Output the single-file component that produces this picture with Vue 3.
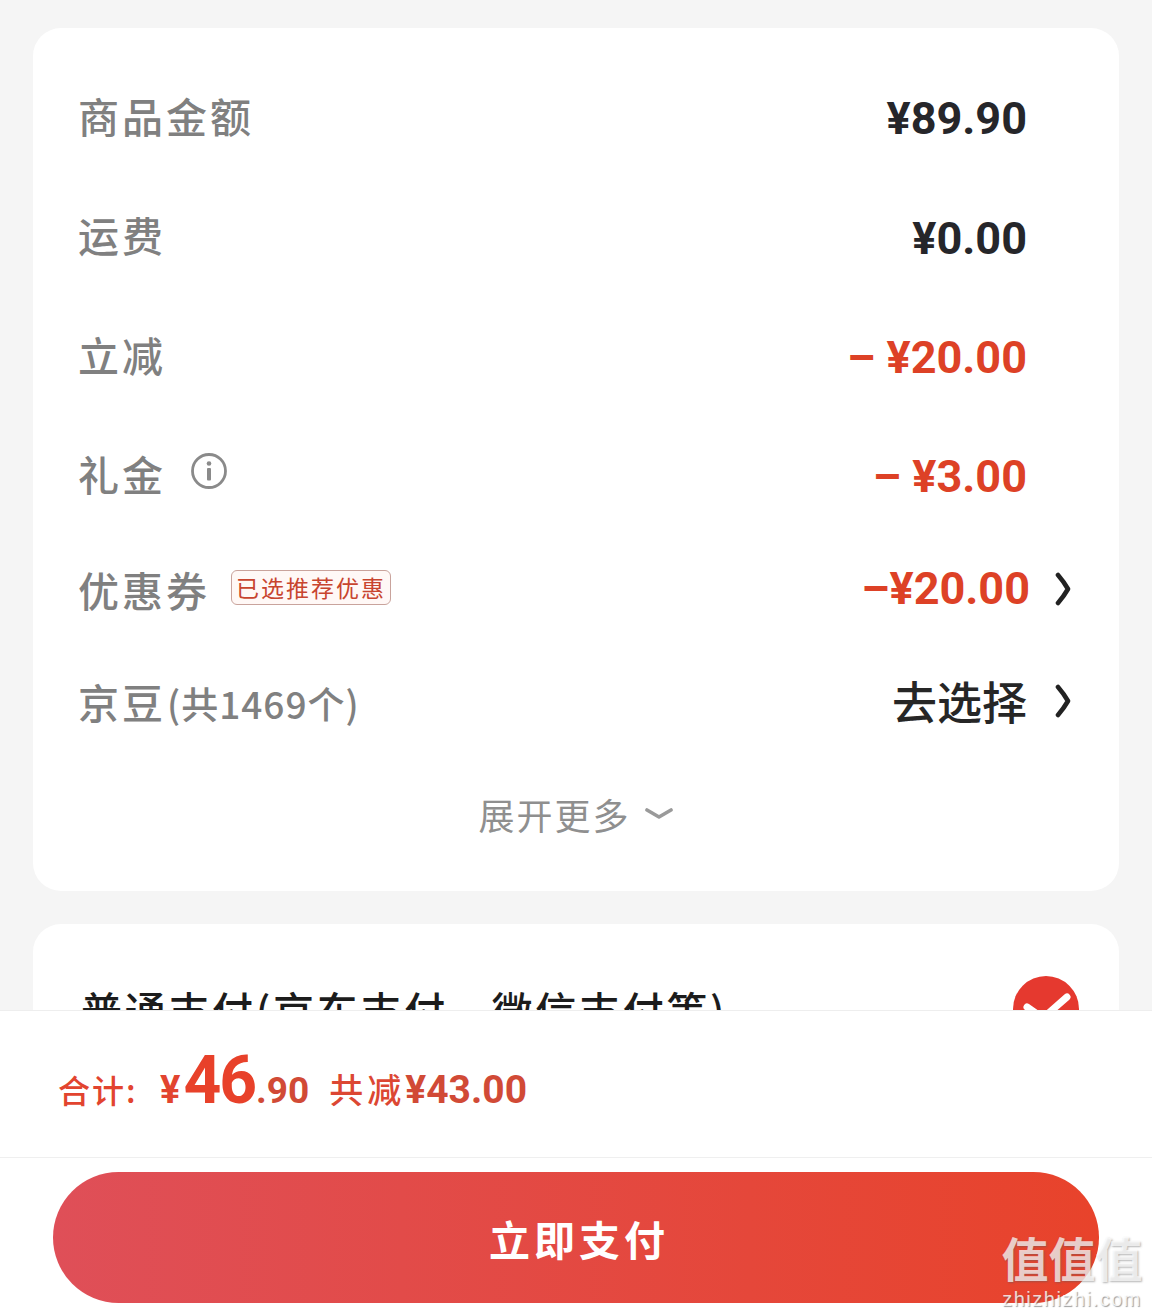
<script setup>
const rows = [
  { label: '商品金额', value: '¥89.90', tone: 'dark', h: 119 },
  { label: '运费', value: '¥0.00', tone: 'dark', h: 120 },
  { label: '立减', value: '– ¥20.00', tone: 'red', h: 119 },
  { label: '礼金', value: '– ¥3.00', tone: 'red', h: 119, info: true },
  { label: '优惠券', value: '–¥20.00', tone: 'red', h: 105, tag: '已选推荐优惠', arrow: true, tight: true },
  { label: '京豆', sub: '(共1469个)', value: '去选择', tone: 'plain', h: 119, arrow: true },
]
</script>

<template>
  <div class="page">
    <div class="scroll">
      <section class="card summary">
        <div
          v-for="row in rows"
          :key="row.label"
          class="row"
          :style="{ height: row.h + 'px' }"
        >
          <div class="left">
            <span class="label" :class="{ flat: row.sub || row.tag }">{{ row.label }}<span v-if="row.sub" class="sub">{{ row.sub }}</span></span>
            <svg v-if="row.info" class="info" viewBox="0 0 36 36" aria-hidden="true">
              <circle cx="18" cy="18" r="16.5" fill="none" stroke="#8a8a8a" stroke-width="2.8" />
              <circle cx="18" cy="10.5" r="2.3" fill="#8a8a8a" />
              <rect x="16" y="15" width="4" height="12.5" rx="1" fill="#8a8a8a" />
            </svg>
            <span v-if="row.tag" class="tag">{{ row.tag }}</span>
          </div>
          <div class="right">
            <span class="value" :class="[row.tone, { tight: row.tight }]">{{ row.value }}</span>
            <svg v-if="row.arrow" class="chevron" viewBox="0 0 16 34" aria-hidden="true">
              <path d="M3 3 Q9 10 13 17 Q9 24 3 31" fill="none" stroke="#222" stroke-width="4.6" stroke-linecap="round" stroke-linejoin="round" />
            </svg>
          </div>
        </div>
        <div class="more">
          <span>展开更多</span>
          <svg class="down" viewBox="0 0 28 14" aria-hidden="true">
            <path d="M2 3 L14 10 L26 3" fill="none" stroke="#9a9a9a" stroke-width="3.6" stroke-linecap="round" stroke-linejoin="round" />
          </svg>
        </div>
      </section>

      <section class="card pay">
        <span class="pay-label">普通支付(京东支付、微信支付等)</span>
        <svg class="check" viewBox="0 0 66 66" aria-hidden="true">
          <circle cx="33" cy="33" r="33" fill="#e5392f" />
          <path d="M14 31 L30 42 L54 21" fill="none" stroke="#fff" stroke-width="7" stroke-linecap="round" stroke-linejoin="round" />
        </svg>
      </section>
    </div>

    <footer class="footer">
      <div class="total">
        <span class="t-label">合计:</span>
        <span class="t-yen">¥</span><span class="t-big">46</span><span class="t-cents">.90</span>
        <span class="t-save">共减</span><span class="t-dec">¥43.00</span>
      </div>
      <div class="action">
        <button class="pay-btn" type="button">立即支付</button>
      </div>
      <div class="watermark" aria-hidden="true">
        <span class="wm-cn">值值值</span>
        <span class="wm-en">zhizhizhi.com</span>
      </div>
    </footer>
  </div>
</template>

<style>
html, body { margin: 0; background: #f5f5f5; }
</style>

<style scoped>
.page {
  position: relative;
  width: 1152px;
  height: 1316px;
  overflow: hidden;
  background: #f5f5f5;
  font-family: "Noto Sans CJK SC", "Noto Sans", sans-serif;
}
.scroll {
  height: 1010px;
  overflow: hidden;
  box-sizing: border-box;
  padding: 28px 33px 0;
  display: flex;
  flex-direction: column;
  gap: 33px;
}
.card {
  flex: none;
  background: #fff;
  border-radius: 28px;
}
.summary {
  height: 863px;
  box-sizing: border-box;
  padding: 31px 48px 0 46px;
}
.row {
  display: flex;
  align-items: center;
  justify-content: space-between;
}
.left { display: flex; align-items: center; }
.label {
  font-size: 41px;
  letter-spacing: 3px;
  color: #808080;
  font-weight: 500;
  margin: 0 0 8px -1px;
  white-space: nowrap;
}
.label.flat { margin-bottom: 0; }
.sub { font-size: 37px; letter-spacing: 1px; margin-left: 1px; }
.info { width: 36px; height: 36px; margin: -12px 0 0 25px; }
.tag {
  margin: -2px 0 0 21px;
  width: 160px;
  height: 35px;
  box-sizing: border-box;
  border: 1px solid #c9a39c;
  border-radius: 6px;
  background: #fff8f6;
  color: #c8452f;
  font-size: 23px;
  line-height: 33px;
  letter-spacing: 2px;
  text-align: center;
  white-space: nowrap;
  overflow: hidden;
}
.right { display: flex; align-items: center; padding-right: 44px; position: relative; }
.value {
  font-family: Roboto, "Noto Sans CJK SC", sans-serif;
  font-size: 45px;
  font-weight: 700;
  line-height: 1;
  white-space: pre;
}
.value.tight { margin-right: -3px; }
.dark { color: #26262a; }
.red { color: #dd4126; }
.plain {
  font-family: "Noto Sans CJK SC", sans-serif;
  color: #262626;
  font-weight: 500;
  font-size: 45px;
}
.chevron {
  position: absolute;
  right: 0;
  top: 50%;
  width: 16px;
  height: 34px;
  margin-top: -17px;
}
.more {
  height: 108px;
  margin-left: -2px;
  padding-left: 3px;
  display: flex;
  align-items: center;
  justify-content: center;
  gap: 14px;
  color: #8f8f8f;
  font-size: 36px;
  letter-spacing: 2px;
}
.down { width: 28px; height: 14px; }
.pay {
  position: relative;
  height: 200px;
  padding-left: 46px;
  padding-top: 55px;
  box-sizing: border-box;
}
.pay-label {
  display: block;
  font-size: 41px;
  letter-spacing: 2.7px;
  line-height: 60px;
  color: #1c1c1c;
  font-weight: 500;
  white-space: nowrap;
  margin-left: 2px;
}
.check {
  position: absolute;
  right: 40px;
  top: 52px;
  width: 66px;
  height: 66px;
}
.footer {
  height: 306px;
  box-sizing: border-box;
  background: #fff;
  border-top: 1px solid #eeeeee;
}
.total {
  height: 146px;
  box-sizing: border-box;
  padding: 22px 0 0 58px;
  display: flex;
  align-items: baseline;
  color: #e2442f;
  font-family: Roboto, "Noto Sans CJK SC", sans-serif;
  font-weight: 700;
}
.t-label {
  font-family: "Noto Sans CJK SC", sans-serif;
  font-size: 32px;
  font-weight: 500;
  letter-spacing: 2px;
  width: 102px;
  white-space: nowrap;
}
.t-yen { font-size: 38px; }
.t-big { font-size: 66px; letter-spacing: -2px; line-height: 96px; color: #e8412a; margin-left: 3px; }
.t-cents { font-size: 37px; color: #d14a36; margin-left: 1px; }
.t-dec { font-size: 39px; color: #d14a36; }
.t-save {
  font-family: "Noto Sans CJK SC", sans-serif;
  font-size: 34px;
  font-weight: 500;
  color: #dc4733;
  margin-left: 20px;
  letter-spacing: 4px;
}
.action {
  border-top: 1px solid #efefef;
  padding: 14px 53px 0;
}
.pay-btn {
  display: block;
  width: 100%;
  height: 131px;
  border: 0;
  border-radius: 66px;
  background: linear-gradient(90deg, #df4f58 0%, #e8432b 100%);
  color: #fff;
  font-family: "Noto Sans CJK SC", sans-serif;
  font-size: 41px;
  font-weight: 700;
  letter-spacing: 4px;
  padding-left: 12px;
}
.watermark {
  position: absolute;
  left: 1000px;
  top: 1229px;
  width: 144px;
  display: flex;
  flex-direction: column;
  align-items: center;
  color: rgba(255, 255, 255, 0.72);
  text-shadow: 1px 1px 2px rgba(90, 90, 90, 0.45);
  font-family: "Noto Sans CJK SC", sans-serif;
  pointer-events: none;
}
.wm-cn { font-size: 47px; line-height: 56px; font-weight: 700; white-space: nowrap; }
.wm-en {
  font-family: "Liberation Sans", sans-serif;
  font-size: 20px;
  line-height: 20px;
  margin-top: 4px;
  letter-spacing: 1.5px;
  color: rgba(255, 255, 255, 0.8);
  text-shadow: 1px 1px 1px rgba(90, 90, 90, 0.6);
  white-space: nowrap;
}
</style>
